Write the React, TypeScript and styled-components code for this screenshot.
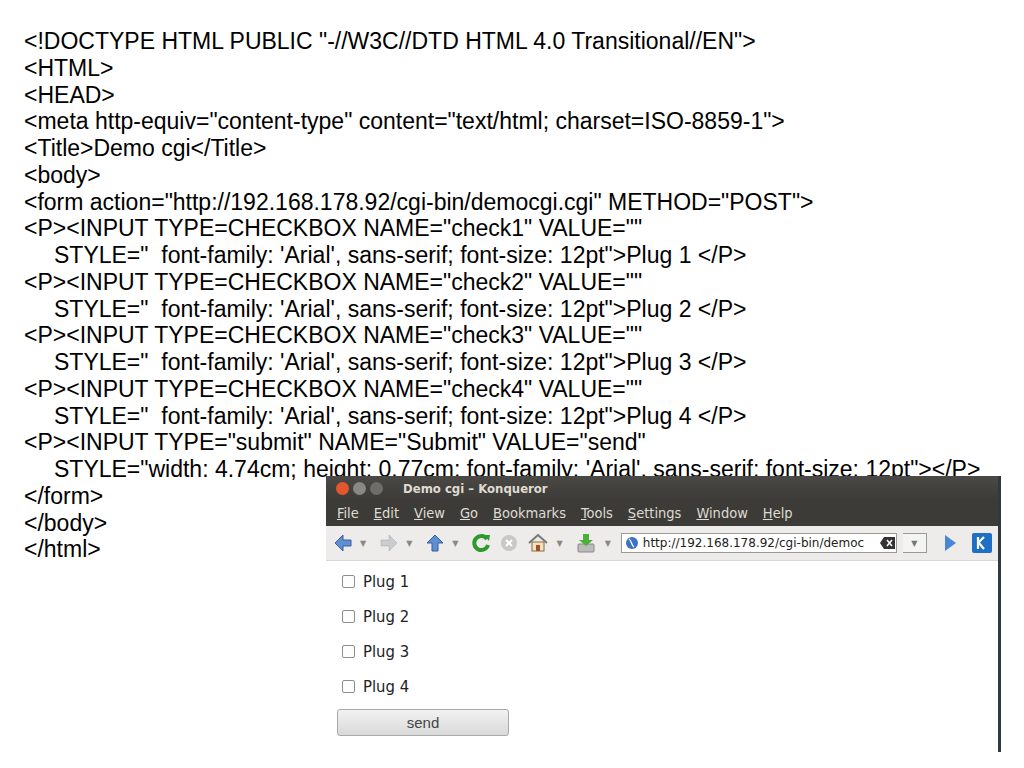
import React from "react";
import styled, { createGlobalStyle } from "styled-components";

const Global = createGlobalStyle`
  html, body { margin: 0; background: #fff; }
  body { width: 1024px; height: 768px; overflow: hidden; position: relative; }
`;

const Code = styled.div`
  padding: 28px 0 0 24px;
  font-family: "Liberation Sans", Arial, sans-serif;
  font-size: 23px;
  line-height: 26.75px;
  color: #000;
  white-space: pre;
`;

const Line = styled.div<{ $indent?: boolean }>`
  padding-left: ${p => (p.$indent ? "30px" : "0")};
`;

const Window = styled.div`
  position: absolute;
  left: 326px;
  top: 476px;
  width: 672px;
  height: 276px;
  background: #fff;
  border-right: 3px solid #2e3a40;
  display: flex;
  flex-direction: column;
  font-family: "DejaVu Sans", sans-serif;
`;

const TitleBar = styled.div`
  height: 24px;
  background: linear-gradient(#4a4945, #3c3b37);
  display: flex;
  align-items: center;
  padding-left: 10px;
  gap: 4px;
  color: #dfdbd2;
  font-family: "DejaVu Sans Condensed", "DejaVu Sans", sans-serif;
  font-size: 13px;
  font-weight: bold;
`;

const Dot = styled.span<{ $c: string }>`
  width: 13px;
  height: 13px;
  border-radius: 50%;
  background: ${p => p.$c};
  display: inline-block;
`;

const Title = styled.span`
  margin-left: 16px;
`;

const MenuBar = styled.div`
  height: 26px;
  background: #3c3b37;
  display: flex;
  align-items: center;
  padding-left: 11px;
  gap: 15px;
  color: #dfdbd2;
  font-family: "DejaVu Sans Condensed", "DejaVu Sans", sans-serif;
  font-size: 14.5px;
`;

const Menu = styled.span`
  &::first-letter { text-decoration: underline; }
`;

const ToolBar = styled.div`
  height: 34px;
  background: #edeceb;
  display: flex;
  align-items: center;
  padding-left: 6px;
  gap: 6px;
  border-bottom: 1px solid #d8d6d3;
`;

const Drop = styled.span`
  font-size: 8px;
  color: #888;
  margin-right: 6px;
`;

const UrlBox = styled.div`
  width: 276px;
  height: 20px;
  margin-left: 4px;
  border: 1px solid #9b9a97;
  background: #fff;
  display: flex;
  align-items: center;
  font-size: 12px;
  color: #222;
  gap: 4px;
  padding-left: 3px;
  box-sizing: border-box;
  white-space: nowrap;
`;

const UrlText = styled.span`
  flex: 1;
`;

const UrlDrop = styled.div`
  width: 24px;
  height: 20px;
  border: 1px solid #9b9a97;
  border-left: none;
  background: #f4f4f3;
  display: flex;
  align-items: center;
  justify-content: center;
  font-size: 8px;
  color: #777;
  box-sizing: border-box;
`;

const Content = styled.div`
  padding: 11px 0 0 16px;
  display: flex;
  flex-direction: column;
  gap: 16px;
  font-family: "DejaVu Sans Condensed", "DejaVu Sans", sans-serif;
  font-size: 16.5px;
  color: #222;
`;

const Row = styled.label`
  display: flex;
  align-items: center;
  gap: 8px;
  height: 19px;
`;

const Box = styled.span`
  width: 11px;
  height: 11px;
  border: 1px solid #8e8e8e;
  border-radius: 2px;
  background: #fdfdfd;
`;

const SendButton = styled.div`
  width: 170px;
  height: 25px;
  margin-left: -5px;
  margin-top: -3px;
  border: 1px solid #a9a9a9;
  border-radius: 3px;
  background: linear-gradient(#f2f2f2, #d9d9d9);
  display: flex;
  align-items: center;
  justify-content: center;
  font-family: "Liberation Sans", Arial, sans-serif;
  font-size: 15px;
  color: #444;
`;

const lines: [string, boolean?][] = [
  ['<!DOCTYPE HTML PUBLIC "-//W3C//DTD HTML 4.0 Transitional//EN">'],
  ["<HTML>"],
  ["<HEAD>"],
  ['<meta http-equiv="content-type" content="text/html; charset=ISO-8859-1">'],
  ["<Title>Demo cgi</Title>"],
  ["<body>"],
  ['<form action="http://192.168.178.92/cgi-bin/democgi.cgi" METHOD="POST">'],
  ['<P><INPUT TYPE=CHECKBOX NAME="check1" VALUE=""'],
  ["STYLE=\"  font-family: 'Arial', sans-serif; font-size: 12pt\">Plug 1 </P>", true],
  ['<P><INPUT TYPE=CHECKBOX NAME="check2" VALUE=""'],
  ["STYLE=\"  font-family: 'Arial', sans-serif; font-size: 12pt\">Plug 2 </P>", true],
  ['<P><INPUT TYPE=CHECKBOX NAME="check3" VALUE=""'],
  ["STYLE=\"  font-family: 'Arial', sans-serif; font-size: 12pt\">Plug 3 </P>", true],
  ['<P><INPUT TYPE=CHECKBOX NAME="check4" VALUE=""'],
  ["STYLE=\"  font-family: 'Arial', sans-serif; font-size: 12pt\">Plug 4 </P>", true],
  ['<P><INPUT TYPE="submit" NAME="Submit" VALUE="send"'],
  ["STYLE=\"width: 4.74cm; height: 0.77cm; font-family: 'Arial', sans-serif; font-size: 12pt\"></P>", true],
  ["</form>"],
  ["</body>"],
  ["</html>"],
];

const Arrow = ({ dir, color }: { dir: "l" | "r" | "u"; color: string }) => {
  const rot = dir === "l" ? 180 : dir === "u" ? -90 : 0;
  return (
    <svg width="22" height="22" viewBox="0 0 22 22">
      <g transform={`rotate(${rot} 11 11)`}>
        <path d="M3 8h8V3l8 8-8 8v-5H3z" fill={color} stroke="#3a5f9a" strokeOpacity={color === "#ccc" ? 0.2 : 1} strokeWidth="1" />
      </g>
    </svg>
  );
};

export default function App() {
  return (
    <>
      <Global />
      <Code>
        {lines.map(([t, i], k) => (
          <Line key={k} $indent={i}>{t}</Line>
        ))}
      </Code>
      <Window>
        <TitleBar>
          <Dot $c="#e4572e" />
          <Dot $c="#8a8883" />
          <Dot $c="#6f6d69" />
          <Title>Demo cgi – Konqueror</Title>
        </TitleBar>
        <MenuBar>
          {["File", "Edit", "View", "Go", "Bookmarks", "Tools", "Settings", "Window", "Help"].map(m => (
            <Menu key={m}>{m}</Menu>
          ))}
        </MenuBar>
        <ToolBar>
          <Arrow dir="l" color="#5d8fd3" />
          <Drop>▼</Drop>
          <Arrow dir="r" color="#ccc" />
          <Drop>▼</Drop>
          <Arrow dir="u" color="#5d8fd3" />
          <Drop>▼</Drop>
          <svg width="22" height="22" viewBox="0 0 22 22">
            <path d="M17 7a7 7 0 1 0 1 6" fill="none" stroke="#2e9a2e" strokeWidth="4" />
            <path d="M14 3l6 0-1 6z" fill="#2e9a2e" />
          </svg>
          <svg width="22" height="22" viewBox="0 0 22 22">
            <circle cx="11" cy="11" r="8" fill="#c8c8c8" />
            <path d="M8 8l6 6M14 8l-6 6" stroke="#fff" strokeWidth="2" />
          </svg>
          <svg width="24" height="22" viewBox="0 0 24 22">
            <path d="M3 11L12 3l9 8" fill="none" stroke="#777" strokeWidth="2" />
            <rect x="6" y="10" width="12" height="9" fill="#f3e2c0" stroke="#8a6a3a" />
            <rect x="10" y="13" width="4" height="6" fill="#a0522d" />
          </svg>
          <Drop>▼</Drop>
          <svg width="24" height="22" viewBox="0 0 24 22">
            <rect x="3" y="12" width="16" height="8" rx="1" fill="#bbb" stroke="#888" />
            <path d="M8 2h6v6h4l-7 6-7-6h4z" fill="#4caf3a" />
          </svg>
          <Drop style={{ marginRight: 0 }}>▼</Drop>
          <UrlBox>
            <svg width="14" height="14" viewBox="0 0 14 14">
              <circle cx="7" cy="7" r="6" fill="#3b73c4" />
              <path d="M4 3c3 2 2 6 5 8" stroke="#fff" strokeWidth="1.3" fill="none" />
            </svg>
            <UrlText>http://192.168.178.92/cgi-bin/democ</UrlText>
            <svg width="16" height="14" viewBox="0 0 16 14">
              <path d="M4 1h11v12H4L0 7z" fill="#333" />
              <path d="M7 4l5 6M12 4l-5 6" stroke="#fff" strokeWidth="1.5" />
            </svg>
          </UrlBox>
          <UrlDrop>▼</UrlDrop>
          <svg width="22" height="22" viewBox="0 0 22 22" style={{ marginLeft: 6 }}>
            <path d="M6 3l11 8-11 8z" fill="#4a86d4" />
          </svg>
          <svg width="22" height="22" viewBox="0 0 22 22" style={{ marginLeft: 4 }}>
            <rect x="1" y="1" width="20" height="20" rx="2" fill="#1f6fc5" />
            <path d="M7 5v12M7 11l6-6M8 11l5 6" stroke="#fff" strokeWidth="2.2" fill="none" />
          </svg>
        </ToolBar>
        <Content>
          {[1, 2, 3, 4].map(n => (
            <Row key={n}>
              <Box />
              Plug {n}
            </Row>
          ))}
          <SendButton>send</SendButton>
        </Content>
      </Window>
    </>
  );
}
